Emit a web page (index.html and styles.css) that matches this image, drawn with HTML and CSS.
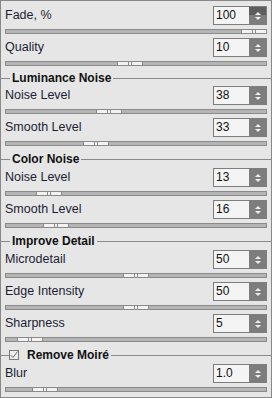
FILE: index.html
```html
<!DOCTYPE html>
<html lang="en">
<head>
    <meta charset="UTF-8">
    <meta name="viewport" content="width=device-width, initial-scale=1.0">
    <title>Noise Settings</title>
    <link rel="stylesheet" href="styles.css">
</head>
<body>
    <div class="panel">
        <div class="row">
            <div class="line">
                <span class="label">Fade, %</span>
                <div class="spin hot"><span class="val">100</span><span class="btn"></span></div>
            </div>
            <div class="track"><span class="thumb" style="left: 235px"></span></div>
        </div>
        <div class="row">
            <div class="line">
                <span class="label">Quality</span>
                <div class="spin"><span class="val">10</span><span class="btn"></span></div>
            </div>
            <div class="track"><span class="thumb" style="left: 111px"></span></div>
        </div>

        <div class="group-title first"><span>Luminance Noise</span></div>
        <div class="row">
            <div class="line">
                <span class="label">Noise Level</span>
                <div class="spin"><span class="val">38</span><span class="btn"></span></div>
            </div>
            <div class="track"><span class="thumb" style="left: 90px"></span></div>
        </div>
        <div class="row">
            <div class="line">
                <span class="label">Smooth Level</span>
                <div class="spin"><span class="val">33</span><span class="btn"></span></div>
            </div>
            <div class="track"><span class="thumb" style="left: 77px"></span></div>
        </div>

        <div class="group-title"><span>Color Noise</span></div>
        <div class="row">
            <div class="line">
                <span class="label">Noise Level</span>
                <div class="spin"><span class="val">13</span><span class="btn"></span></div>
            </div>
            <div class="track"><span class="thumb" style="left: 30px"></span></div>
        </div>
        <div class="row">
            <div class="line">
                <span class="label">Smooth Level</span>
                <div class="spin"><span class="val">16</span><span class="btn"></span></div>
            </div>
            <div class="track"><span class="thumb" style="left: 37px"></span></div>
        </div>

        <div class="group-title"><span>Improve Detail</span></div>
        <div class="row">
            <div class="line">
                <span class="label">Microdetail</span>
                <div class="spin"><span class="val">50</span><span class="btn"></span></div>
            </div>
            <div class="track"><span class="thumb" style="left: 117px"></span></div>
        </div>
        <div class="row">
            <div class="line">
                <span class="label">Edge Intensity</span>
                <div class="spin"><span class="val">50</span><span class="btn"></span></div>
            </div>
            <div class="track"><span class="thumb" style="left: 117px"></span></div>
        </div>
        <div class="row">
            <div class="line">
                <span class="label">Sharpness</span>
                <div class="spin"><span class="val">5</span><span class="btn"></span></div>
            </div>
            <div class="track"><span class="thumb" style="left: 11px"></span></div>
        </div>

        <div class="group-title check">
            <span class="checkbox">
                <svg width="8" height="8" viewBox="0 0 8 8"><path d="M0.5 4 L3 6.5 L7.5 0.5" fill="none" stroke="#6a6a6a" stroke-width="1"/></svg>
            </span>
            <span>Remove Moiré</span>
        </div>
        <div class="row">
            <div class="line">
                <span class="label">Blur</span>
                <div class="spin"><span class="val">1.0</span><span class="btn"></span></div>
            </div>
            <div class="track"><span class="thumb" style="left: 26px"></span></div>
        </div>
    </div>
</body>
</html>
```

FILE: styles.css
```css
html, body {
    margin: 0;
    padding: 0;
}

body {
    font-family: 'Liberation Sans', Arial, sans-serif;
    font-size: 12px;
    color: #1d1d35;
    background: #e6e6e6;
}

.panel {
    box-sizing: border-box;
    width: 272px;
    height: 398px;
    padding: 5px 4px 0;
    border: 1px solid #888;
    background: #e6e6e6;
    overflow: hidden;
}

.row {
    height: 32px;
}

.line {
    display: flex;
    justify-content: space-between;
    align-items: center;
    height: 19px;
}

.label {
    font-size: 12.5px;
    line-height: 19px;
}

/* number box with up/down buttons */
.spin {
    box-sizing: border-box;
    display: flex;
    width: 54px;
    height: 19px;
    border: 1px solid #7d7d7d;
}

.val {
    flex: 1;
    padding-left: 2px;
    line-height: 17px;
    background: #f4f4f4;
    color: #111;
}

.btn {
    width: 17px;
    background: #7d7d7d;
    display: flex;
    flex-direction: column;
    align-items: center;
    justify-content: center;
    gap: 2px;
}

.hot .btn {
    background: linear-gradient(#5e5e5e 0, #5e5e5e 50%, #7d7d7d 50%);
}

.btn::before,
.btn::after {
    content: '';
    width: 0;
    height: 0;
    border-left: 3px solid transparent;
    border-right: 3px solid transparent;
}

.btn::before {
    border-bottom: 3px solid #eeeeee;
}

.btn::after {
    border-top: 3px solid #eeeeee;
}

/* slider */
.track {
    position: relative;
    box-sizing: border-box;
    height: 5px;
    margin-top: 4px;
    border: 1px solid #8a8a8a;
    background: #b5b5b5;
}

.thumb {
    position: absolute;
    top: -1px;
    box-sizing: border-box;
    width: 26px;
    height: 5px;
    border: 1px solid #8a8a8a;
    background: #f2f2f2;
}

.thumb::before,
.thumb::after {
    content: '';
    position: absolute;
    top: 0;
    width: 1px;
    height: 3px;
    background: #8a8a8a;
}

.thumb::before {
    left: 10px;
}

.thumb::after {
    left: 13px;
}

/* group headers */
.group-title {
    display: flex;
    align-items: center;
    height: 18px;
    margin: 0 -4px;
    font-weight: bold;
    color: #111;
}

.group-title.first {
    height: 16px;
}

.group-title::before,
.group-title::after {
    content: '';
    height: 0;
    border-top: 1px solid #8a8a8a;
}

.group-title::before {
    width: 9px;
    margin-right: 2px;
}

.group-title::after {
    flex: 1;
    margin-left: 2px;
}

.group-title.check::before {
    width: 8px;
    margin-right: 0;
}

.checkbox {
    box-sizing: border-box;
    display: flex;
    align-items: center;
    justify-content: center;
    width: 10px;
    height: 10px;
    margin-right: 8px;
    border: 1px solid #7a7a7a;
    background: #eeeeee;
}
```
